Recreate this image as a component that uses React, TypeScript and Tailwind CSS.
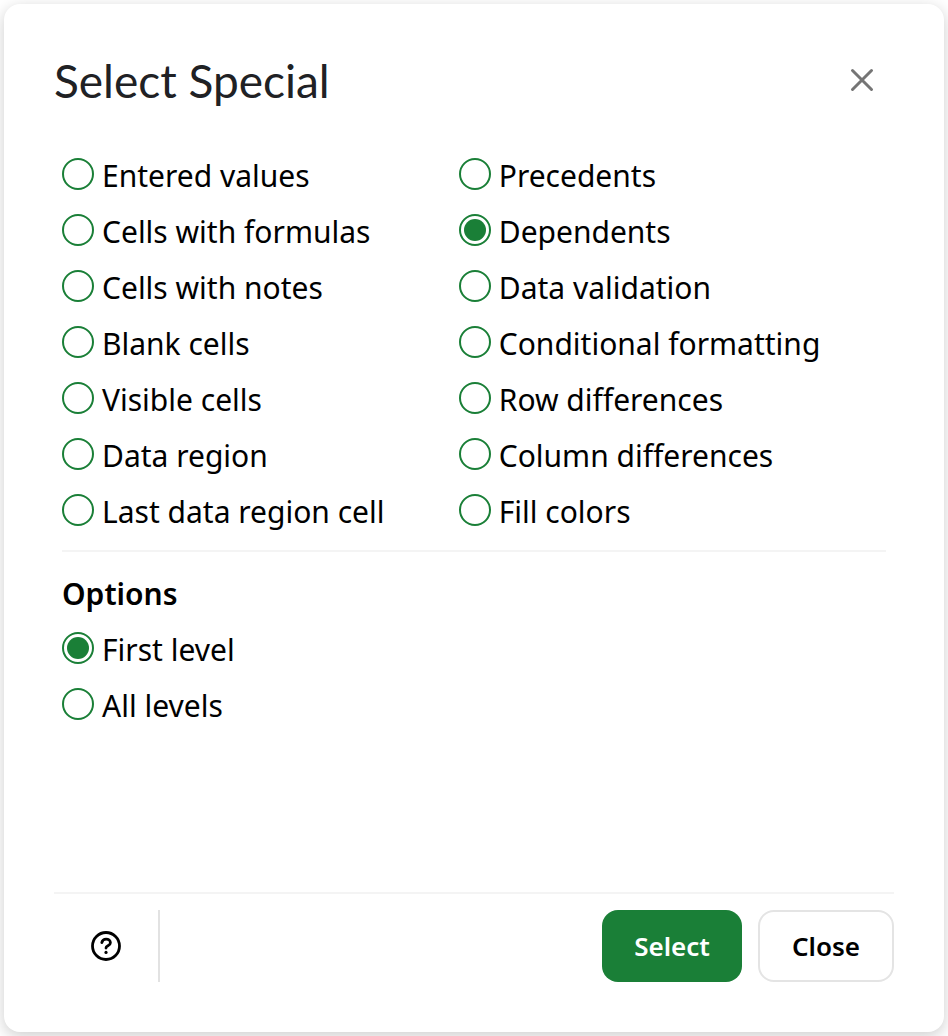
import { useState } from "react";

const leftChoices = [
  "Entered values",
  "Cells with formulas",
  "Cells with notes",
  "Blank cells",
  "Visible cells",
  "Data region",
  "Last data region cell",
];

const rightChoices = [
  "Precedents",
  "Dependents",
  "Data validation",
  "Conditional formatting",
  "Row differences",
  "Column differences",
  "Fill colors",
];

const levels = ["First level", "All levels"];

type RadioProps = {
  name: string;
  label: string;
  selected: string;
  onSelect: (value: string) => void;
};

function Radio({ name, label, selected, onSelect }: RadioProps) {
  return (
    <label className="flex h-14 cursor-pointer items-center gap-2 whitespace-nowrap">
      <input
        type="radio"
        name={name}
        value={label}
        checked={selected === label}
        onChange={() => onSelect(label)}
        className="size-8 shrink-0 cursor-pointer appearance-none rounded-full border-2 border-[#1a7f37] p-[3px] before:block before:size-full before:rounded-full checked:before:bg-[#1a7f37]"
      />
      <span className="pt-0.5">{label}</span>
    </label>
  );
}

function App() {
  const [target, setTarget] = useState("Dependents");
  const [level, setLevel] = useState("First level");

  return (
    <div className="flex min-h-screen overflow-hidden bg-white p-1 font-['Noto_Sans','Open_Sans',sans-serif] text-[30px] text-black">
      <div
        role="dialog"
        aria-labelledby="dialog-title"
        className="flex flex-1 flex-col rounded-2xl bg-white p-[50px] shadow-[0_4px_16px_rgba(0,0,0,0.2)]"
      >
        <header className="flex h-[52px] items-center justify-between">
          <h1
            id="dialog-title"
            className="font-['Lato',sans-serif] text-[46px] text-[#202124]"
          >
            Select Special
          </h1>
          <button
            type="button"
            aria-label="Close dialog"
            className="flex h-12 w-16 cursor-pointer items-center justify-center text-[#757575]"
          >
            <svg width="24" height="24" viewBox="0 0 24 24" fill="none">
              <path
                d="M2.5 2.5l19 19M21.5 2.5l-19 19"
                stroke="currentColor"
                strokeWidth="3"
                strokeLinecap="round"
              />
            </svg>
          </button>
        </header>

        <main className="mt-10 px-2">
          <div className="grid grid-cols-[13fr_14fr]">
            <div>
              {leftChoices.map((label) => (
                <Radio
                  key={label}
                  name="target"
                  label={label}
                  selected={target}
                  onSelect={setTarget}
                />
              ))}
            </div>
            <div>
              {rightChoices.map((label) => (
                <Radio
                  key={label}
                  name="target"
                  label={label}
                  selected={target}
                  onSelect={setTarget}
                />
              ))}
            </div>
          </div>

          <section className="mt-3 border-t-2 border-[#f4f4f4] pt-3">
            <h2 className="flex h-14 items-center pt-0.5 font-semibold">
              Options
            </h2>
            {levels.map((label) => (
              <Radio
                key={label}
                name="level"
                label={label}
                selected={level}
                onSelect={setLevel}
              />
            ))}
          </section>
        </main>

        <footer className="mt-auto flex border-t-2 border-[#f4f4f4] pt-4 text-[26px] font-semibold">
          <div className="flex w-[106px] items-center justify-center border-r-2 border-[#e2e2e2]">
            <button type="button" aria-label="Help" className="cursor-pointer">
              <svg width="32" height="32" viewBox="0 0 32 32" fill="none">
                <circle
                  cx="16"
                  cy="16"
                  r="13.5"
                  stroke="currentColor"
                  strokeWidth="2.8"
                />
                <path
                  d="M11.8 12.6c.5-2.2 2.1-3.5 4.3-3.5 2.5 0 4.3 1.5 4.3 3.6 0 3.2-4.4 2.9-4.4 5.3"
                  stroke="currentColor"
                  strokeWidth="2.8"
                  strokeLinecap="round"
                />
                <circle cx="16" cy="22.4" r="1.6" fill="currentColor" />
              </svg>
            </button>
          </div>
          <div className="ml-auto flex gap-4">
            <button
              type="button"
              className="h-[72px] min-w-[140px] cursor-pointer rounded-2xl bg-[#1a7f37] px-6 text-white"
            >
              Select
            </button>
            <button
              type="button"
              className="h-[72px] min-w-[136px] cursor-pointer rounded-2xl border-2 border-[#e4e4e4] px-6"
            >
              Close
            </button>
          </div>
        </footer>
      </div>
    </div>
  );
}

export default App;
